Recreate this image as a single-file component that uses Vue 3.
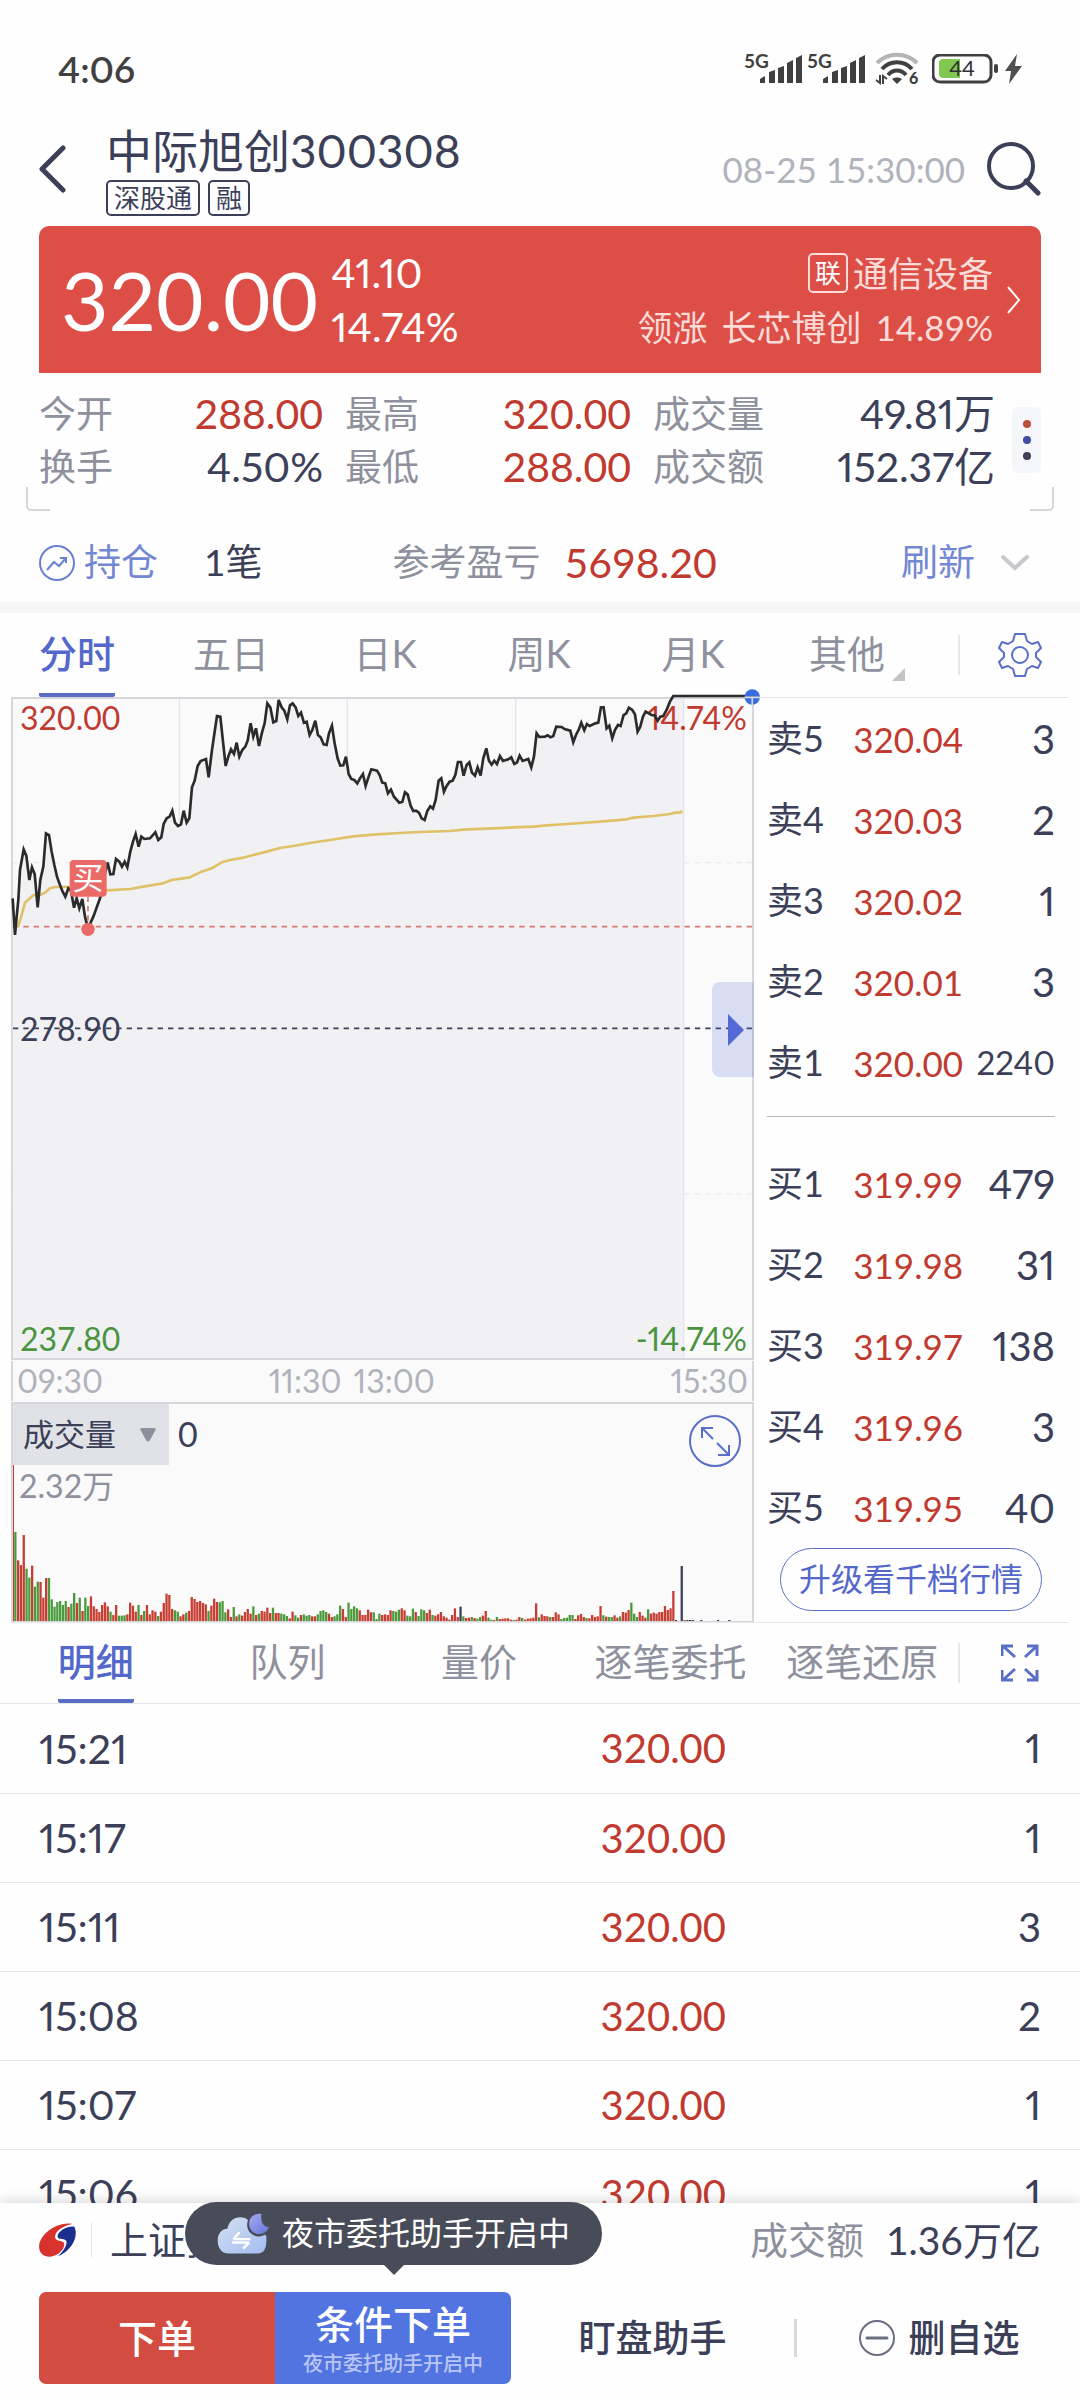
<!-- App.vue -->
<template>
  <div class="page">
    <div class="status-bar">
      <span class="clock">4:06</span>
      <div class="status-icons">
        <svg v-for="n in 2" :key="n" class="signal" width="60" height="48" viewBox="-1 -8 60 48">
          <text x="0" y="15" font-size="19" font-weight="700" fill="#404040">5G</text>
          <path d="M16 30V26L21 23V30ZM25 30V19L31 17V30ZM34 30V15L40 13V30ZM43 30V10L49 7V30ZM52 30V5L58 2V30Z" fill="#404040" />
        </svg>
        <svg class="wifi" width="48" height="48" viewBox="0 -7 48 48">
          <path d="M2 11C13 0 31 0 42 11" fill="none" stroke="#b4b4b4" stroke-width="4" />
          <path d="M7 17C15 8 29 8 37 17" fill="none" stroke="#404040" stroke-width="4" />
          <path d="M13 23C18 17 26 17 31 23" fill="none" stroke="#404040" stroke-width="4" />
          <path d="M17 27C20 25 24 25 27 27L22 32Z" fill="#404040" />
          <path d="M1 28L5 31V23M8 32V24L12 27" fill="none" stroke="#404040" stroke-width="2" />
          <text x="34" y="32" font-size="16" font-weight="900" fill="#404040">6</text>
        </svg>
        <svg class="battery" width="66" height="30" viewBox="0 0 66 30">
          <rect x="1" y="1" width="58" height="27" rx="7" fill="none" stroke="#404040" stroke-width="3" />
          <path d="M11 5H28V24H11Q7 24 7 20V9Q7 5 11 5Z" fill="#80c850" />
          <rect x="62" y="10" width="4" height="9" rx="2" fill="#404040" />
          <text x="30" y="22" font-size="22" text-anchor="middle" fill="#303030">44</text>
        </svg>
        <svg width="17" height="30" viewBox="0 0 17 30">
          <path d="M12 0L0 17H6L4 30L17 12H10Z" fill="#505050" />
        </svg>
      </div>
    </div>

    <header class="header">
      <button class="icon-btn back" aria-label="返回">
        <svg width="28" height="48" viewBox="0 0 28 48">
          <path d="M24 3L3 24L24 45" fill="none" stroke="#3b4058" stroke-width="5" stroke-linecap="round" stroke-linejoin="round" />
        </svg>
      </button>
      <div class="title-block">
        <h1>中际旭创300308</h1>
        <div class="tags">
          <span class="tag">深股通</span>
          <span class="tag">融</span>
        </div>
      </div>
      <span class="quote-time">08-25 15:30:00</span>
      <button class="icon-btn" aria-label="搜索">
        <svg width="54" height="54" viewBox="0 0 54 54">
          <circle cx="24" cy="24" r="22" fill="none" stroke="#3b4058" stroke-width="4" />
          <path d="M39 39L51 51" stroke="#3b4058" stroke-width="5" stroke-linecap="round" />
        </svg>
      </button>
    </header>

    <section class="summary">
      <div class="price-card">
        <span class="price">320.00</span>
        <div class="change">
          <span>41.10</span>
          <span>14.74%</span>
        </div>
        <a href="#" class="sector">
          <span class="sector-line"><i class="link-tag">联</i>通信设备</span>
          <span class="sector-line leader"><span>领涨</span><span>长芯博创</span><span>14.89%</span></span>
        </a>
        <svg class="card-arrow" width="14" height="28" viewBox="0 0 14 28">
          <path d="M1 1L12 14L1 27" fill="none" stroke="#fff" stroke-width="2" />
        </svg>
      </div>
      <div class="stats">
        <dl class="stats-grid">
          <div v-for="s in stats" :key="s.label" class="stat">
            <dt>{{ s.label }}</dt>
            <dd :class="{ up: s.up }">{{ s.value }}</dd>
          </div>
        </dl>
        <button class="more-btn" aria-label="更多">
          <i class="dot dot-red"></i><i class="dot dot-blue"></i><i class="dot dot-dark"></i>
        </button>
      </div>
      <i class="corner corner-left"></i>
      <i class="corner corner-right"></i>
    </section>

    <section class="position">
      <svg width="38" height="38" viewBox="0 0 38 38">
        <circle cx="19" cy="19" r="17" fill="none" stroke="#6b80d0" stroke-width="2" />
        <path d="M9 26L16 18L21 22L28 14M22 14H28V19" fill="none" stroke="#6b80d0" stroke-width="2" />
      </svg>
      <a href="#" class="pos-link">持仓</a>
      <span class="pos-count">1笔</span>
      <span class="pos-label">参考盈亏</span>
      <span class="pos-profit">5698.20</span>
      <button class="refresh">刷新</button>
      <button class="icon-btn" aria-label="展开">
        <svg width="28" height="16" viewBox="0 0 28 16">
          <path d="M2 2L14 13L26 2" fill="none" stroke="#c8c9ce" stroke-width="4" stroke-linecap="round" />
        </svg>
      </button>
    </section>

    <nav class="tabs period-tabs">
      <div class="tab-list">
        <button v-for="(t, i) in periods" :key="t" class="tab" :class="{ active: period === i }" @click="period = i">
          <span>{{ t }}<i v-if="i === 5" class="tri"></i></span>
        </button>
      </div>
      <button class="icon-btn tab-icon" aria-label="设置">
        <svg width="44" height="44" viewBox="0 0 44 44">
          <path d="M17 1H27L29 8L34 11L40 9L43 15L38 20V24L43 29L40 35L34 33L29 36L27 43H17L15 36L10 33L4 35L1 29L6 24V20L1 15L4 9L10 11L15 8Z" fill="none" stroke="#5a70c8" stroke-width="2" stroke-linejoin="round" />
          <circle cx="22" cy="22" r="8" fill="none" stroke="#5a70c8" stroke-width="2" />
        </svg>
      </button>
    </nav>

    <section class="market">
      <div class="charts">
        <div class="price-chart">
          <svg class="chart-svg" viewBox="0 0 739 659">
            <g transform="translate(-13 -19) scale(0.3333)">
              <path d="M538 57V2034M1042 57V2034M1547 57V2034" stroke="#e4e4e8" stroke-width="4" />
              <path d="M39 548H2257M39 1542H2257" stroke="#ebebee" stroke-width="4" stroke-dasharray="16 15" />
              <path :d="areaPath" fill="#f1f1f4" />
              <path d="M2051 57V2034" stroke="#e4e4e8" stroke-width="4" />
              <path d="M39 740H2257" stroke="#d77a6e" stroke-width="5" stroke-dasharray="16 15" />
              <path d="M39 1045H2257" stroke="#3b4058" stroke-width="5" stroke-dasharray="16 15" />
              <polyline :points="avgLine" fill="none" stroke="#dfc168" stroke-width="8" stroke-linejoin="round" />
            </g>
            <text x="7" y="31" fill="#c03a2f">320.00</text>
            <text x="734" y="31" text-anchor="end" class="percent" fill="#c03a2f">14.74%</text>
            <text x="7" y="342" fill="#3b4058">278.90</text>
            <text x="7" y="652" fill="#4a9440">237.80</text>
            <text x="734" y="652" text-anchor="end" class="percent" fill="#4a9440">-14.74%</text>
            <g transform="translate(-13 -19) scale(0.3333)">
              <polyline :points="priceLine" fill="none" stroke="#2b2b2b" stroke-width="8" stroke-linejoin="miter" />
              <path d="M264 650V740" stroke="#d77a6e" stroke-width="5" stroke-dasharray="16 12" />
              <circle cx="264" cy="748" r="20" fill="#e96a66" />
              <rect x="209" y="540" width="111" height="110" rx="12" fill="#e96a66" />
              <circle cx="2257" cy="51" r="23" fill="#3a6ce0" />
              <path d="M2234 52H2280M2257 52V75" stroke="#d6d7dc" stroke-width="5" />
            </g>
            <text x="75" y="190" class="mark-text" text-anchor="middle" fill="#fff">买</text>
          </svg>
          <button class="side-handle" aria-label="收起盘口">
            <svg width="16" height="32" viewBox="0 0 16 32"><path d="M0 0L16 16L0 32Z" fill="#5469d6" /></svg>
          </button>
        </div>
        <div class="time-axis">
          <div class="time-part"><span>09:30</span><span>11:30</span></div>
          <div class="time-part"><span>13:00</span><span>15:30</span></div>
        </div>
        <div class="volume-chart">
          <svg class="chart-svg" viewBox="0 0 739 217">
            <rect v-for="b in bars" :key="b.i" :x="b.x" :y="b.y" :width="b.w" :height="b.h" :fill="b.color" />
          </svg>
          <div class="volume-head">
            <label class="indicator">
              <select aria-label="指标">
                <option>成交量</option>
              </select>
              <svg width="16" height="14" viewBox="0 0 16 14">
                <path d="M2 0H14Q17 0 15 3L10 12Q8 15 6 12L1 3Q-1 0 2 0Z" fill="#8e919d" />
              </svg>
            </label>
            <span>0</span>
          </div>
          <div class="volume-max">2.32万</div>
          <button class="icon-btn expand" aria-label="放大">
            <svg width="54" height="54" viewBox="0 0 54 54">
              <circle cx="27" cy="27" r="25" fill="none" stroke="#5a70c8" stroke-width="2" />
              <path d="M25 25L14 14M14 24V14H25M29 29L41 41M41 31V41H30" fill="none" stroke="#5a70c8" stroke-width="2" />
            </svg>
          </button>
        </div>
      </div>

      <div class="order-book">
        <table>
          <tbody>
            <tr v-for="o in asks" :key="o[0]">
              <th>{{ o[0] }}</th>
              <td class="ob-price">{{ o[1] }}</td>
              <td class="ob-qty" :class="{ long: o[2].length > 3 }">{{ o[2] }}</td>
            </tr>
          </tbody>
        </table>
        <div class="ob-line"></div>
        <table>
          <tbody>
            <tr v-for="o in bids" :key="o[0]">
              <th>{{ o[0] }}</th>
              <td class="ob-price">{{ o[1] }}</td>
              <td class="ob-qty">{{ o[2] }}</td>
            </tr>
          </tbody>
        </table>
        <button class="upgrade">升级看千档行情</button>
      </div>
    </section>

    <nav class="tabs detail-tabs">
      <div class="tab-list">
        <button v-for="(t, i) in details" :key="t" class="tab" :class="{ active: detail === i }" @click="detail = i">
          <span>{{ t }}</span>
        </button>
      </div>
      <button class="icon-btn tab-icon" aria-label="全屏">
        <svg width="38" height="38" viewBox="0 0 38 38">
          <path d="M1 12V2H12M2 2L14 13M26 2H36V12M36 2L24 13M1 26V36H12M2 36L14 25M26 36H36V26M36 36L24 25" fill="none" stroke="#5a70c8" stroke-width="3" />
        </svg>
      </button>
    </nav>

    <div class="trades">
      <table>
        <tbody>
          <tr v-for="t in trades" :key="t[0]">
            <td class="t-time">{{ t[0] }}</td>
            <td class="t-price">320.00</td>
            <td class="t-qty">{{ t[1] }}</td>
          </tr>
        </tbody>
      </table>
    </div>

    <footer class="footer">
      <div class="index-row">
        <svg width="37" height="34" viewBox="0 0 106 98">
          <path d="M96 3C55 -6 0 32 0 68C0 90 15 98 32 97C60 94 76 70 72 57C66 50 48 54 46 42C44 24 70 8 96 3Z" fill="#d8322c" />
          <path d="M101 10C114 34 100 76 54 96C74 78 82 60 78 51C70 42 54 50 53 38C55 22 80 8 101 10Z" fill="#1c2f8c" />
        </svg>
        <i class="v-line"></i>
        <span class="index-name">上证指数</span>
        <span class="index-label">成交额</span>
        <span class="index-value">1.36万亿</span>
      </div>
      <div class="actions">
        <button class="order">下单</button>
        <button class="cond-order">
          <span>条件下单</span>
          <small>夜市委托助手开启中</small>
        </button>
        <button class="text-btn">盯盘助手</button>
        <i class="v-line bold"></i>
        <button class="text-btn">
          <svg width="38" height="38" viewBox="0 0 38 38">
            <circle cx="19" cy="19" r="17" fill="none" stroke="#6a6e80" stroke-width="2" />
            <path d="M9 19H29" stroke="#6a6e80" stroke-width="3" stroke-linecap="round" />
          </svg>
          删自选
        </button>
      </div>
      <div class="bubble">
        <svg width="52" height="42" viewBox="0 0 152 122">
          <defs>
            <linearGradient id="cloud" x1="0" y1="0" x2="1" y2="1">
              <stop offset="0" stop-color="#d5e0f2" />
              <stop offset="1" stop-color="#a3bdf0" />
            </linearGradient>
            <linearGradient id="moon" x1="0" y1="0" x2="1" y2="1">
              <stop offset="0" stop-color="#a5a8f0" />
              <stop offset="1" stop-color="#6678d8" />
            </linearGradient>
          </defs>
          <path d="M34 118C12 118 2 100 2 80C2 58 16 46 30 46C36 22 50 12 68 12C84 12 94 20 98 32C118 34 126 52 144 66C146 96 142 118 118 118Z" fill="url(#cloud)" />
          <circle cx="122" cy="34" r="34" fill="#474c58" />
          <path d="M130 2C108 0 92 14 94 34C96 52 110 62 124 61C140 60 150 50 152 40C138 42 126 28 130 2Z" fill="url(#moon)" />
          <path d="M48 76H98M48 76L66 56M94 86H44M94 86L76 104" fill="none" stroke="#fff" stroke-width="7" />
        </svg>
        夜市委托助手开启中
      </div>
    </footer>
  </div>
</template>

<script setup>
  import { computed, ref } from 'vue';

  const period = ref(0);
  const detail = ref(0);

  const periods = ['分时', '五日', '日K', '周K', '月K', '其他'];
  const details = ['明细', '队列', '量价', '逐笔委托', '逐笔还原'];

  const stats = [
    { label: '今开', value: '288.00', up: true },
    { label: '最高', value: '320.00', up: true },
    { label: '成交量', value: '49.81万' },
    { label: '换手', value: '4.50%' },
    { label: '最低', value: '288.00', up: true },
    { label: '成交额', value: '152.37亿' }
  ];

  const asks = [
    ['卖5', '320.04', '3'],
    ['卖4', '320.03', '2'],
    ['卖3', '320.02', '1'],
    ['卖2', '320.01', '3'],
    ['卖1', '320.00', '2240']
  ];

  const bids = [
    ['买1', '319.99', '479'],
    ['买2', '319.98', '31'],
    ['买3', '319.97', '138'],
    ['买4', '319.96', '3'],
    ['买5', '319.95', '40']
  ];

  const trades = [
    ['15:21', '1'],
    ['15:17', '1'],
    ['15:11', '3'],
    ['15:08', '2'],
    ['15:07', '1'],
    ['15:06', '1']
  ];

  // minute prices, three units per pixel
  const priceLine = `38,655 45,765 50,710 55,660 60,570 71,508 79,527 88,600 96,562 104,582 113,682 121,600 130,560
    138,460 147,465 155,515 163,555 171,590 180,615 188,635 196,650 205,625 213,632 222,683 230,655 238,685 247,657
    255,710 264,745 280,710 300,655 310,600 323,548 331,583 340,582 348,537 358,545 366,560 374,545 382,562 391,515
    399,485 407,462 416,500 424,470 433,477 450,475 466,457 475,480 484,472 491,432 500,415 509,410 517,392 525,428
    534,438 543,433 551,392 560,428 568,415 576,322 584,302 593,258 602,243 618,237 626,292 636,210 651,108 661,110
    677,258 685,230 693,208 702,222 710,188 718,230 727,210 736,200 743,182 752,130 760,170 768,145 777,198 786,158
    794,130 802,70 811,82 820,127 829,123 836,60 845,82 853,92 862,118 870,76 878,70 887,82 895,108 903,98 912,128
    920,125 929,165 937,150 946,122 954,165 962,172 971,193 980,195 987,160 996,137 1004,190 1013,235 1021,257
    1030,256 1038,230 1046,282 1054,297 1063,300 1072,310 1080,295 1089,282 1097,318 1106,290 1114,268 1131,272
    1139,285 1147,308 1156,310 1164,340 1173,329 1182,350 1198,368 1207,366 1215,337 1223,343 1232,377 1240,393
    1248,392 1257,398 1265,415 1274,420 1282,393 1291,379 1299,386 1307,360 1316,302 1324,295 1332,335 1340,318
    1349,305 1358,302 1366,285 1374,246 1383,246 1391,287 1400,255 1408,247 1416,278 1425,287 1433,262 1442,287
    1450,235 1459,205 1467,242 1475,254 1483,242 1491,252 1500,228 1509,243 1525,238 1534,232 1543,252 1551,248
    1559,227 1568,243 1585,237 1594,262 1602,230 1610,160 1618,171 1635,170 1643,166 1652,172 1660,168 1669,140
    1685,141 1694,147 1711,152 1720,187 1728,165 1736,150 1744,128 1753,151 1761,132 1769,138 1786,130 1795,128
    1803,82 1811,82 1820,145 1828,137 1837,175 1845,150 1854,135 1862,138 1871,105 1879,100 1887,83 1897,90
    1905,103 1913,155 1921,140 1929,110 1937,95 1955,105 1964,106 1973,122 1981,110 1990,108 2000,90 2010,65
    2020,48 2257,48`;

  const avgLine = `38,740 55,738 65,705 75,668 90,655 100,645 120,645 135,638 150,625 165,621 210,621 265,630 320,631
    390,627 430,620 485,611 515,600 570,592 605,575 635,565 665,547 690,540 735,532 760,525 800,515 840,504 880,498
    930,489 990,480 1060,469 1130,463 1200,459 1260,456 1350,453 1390,449 1480,445 1600,440 1640,436 1700,432
    1800,425 1880,418 1900,413 1960,408 2010,402 2025,398 2040,398 2047,393`;

  const areaPath = computed(() => {
    const points = priceLine.split(/\s+/).slice(0, -2);
    return `M39 2034L${points.join('L')}L2020 57L2051 57L2051 2034Z`;
  });

  // r - up, g - down, d - flat
  const volumes = `r468 g267 r182 r168 r258 g157 g130 r166 g103 g118 r117 r70 r129 g129 g65 g43 g57 g60 g48 g60 r42 g52
    g84 r54 g70 r30 g70 g45 r74 r44 r36 r27 r48 r56 r44 g28 r18 r48 g16 g16 g17 r20 r55 r46 r28 g48 r18 g30 r48 r20 r32
    r28 g15 r28 r54 r82 r78 r36 g32 g28 r14 r20 g25 r30 r72 r66 r57 r60 r54 r50 g30 r46 r67 r57 g56 g60 g26 r35 r12 g42
    r14 g20 r16 r27 r36 r22 g44 r18 g22 r30 r28 r40 r24 g40 r24 r24 g22 g20 g15 r8 r28 g17 g10 r18 g20 g16 g18 r14 r14
    g20 g30 g32 g27 r22 r12 g14 g20 g46 r36 r12 g55 g36 g44 g38 r32 r18 r18 r34 r26 g26 g6 g22 r18 r20 r18 r32 g30 g28
    g34 r38 r32 g16 g14 g37 r27 g15 g35 g32 r24 r34 g18 r16 r20 r27 r14 r10 r4 r18 r38 r12 d43 g14 r9 r10 g12 r9 g7 g12
    r16 r30 g10 g4 r3 g12 r6 r7 r8 r8 r4 g3 r4 r12 g9 r4 r7 r8 r10 r53 g11 r20 r15 r14 g12 r12 r26 r20 g6 g9 g10 g18 g18
    r6 r17 r21 r12 g9 r8 r18 r12 r14 r45 g17 r13 g12 g12 r17 r10 g14 r27 r25 r33 g55 g22 g12 r27 r16 r10 g35 r22 r25 r22
    r27 r27 r45 r33 r38 r90 d3 d0 d165 r3 d3 d3 d3 d0 d0 d3 d0 d0 d0 d0 d0 d3 d0 d0 d0 d3`;

  const barColors = { r: '#c73d32', g: '#4a9a3c', d: '#3b4058' };

  const bars = computed(() => {
    return volumes.split(/\s+/).map((v, i) => {
      const h = Number(v.slice(1)) / 3;
      return {
        i,
        x: i === 0 ? 0 : i * 2.8 - 1.6,
        y: 217 - h,
        w: i === 0 ? 1 : 2.3,
        h,
        color: barColors[v[0]]
      };
    });
  });
</script>

<style>
  body {
    margin: 0;
    background: #fff;
  }
</style>

<style scoped>
  .page {
    display: flex;
    flex-direction: column;
    height: 100vh;
    overflow: hidden;
    background: #fefefe;
    color: #3b4058;
    font-family: Lato, "Noto Sans CJK SC", sans-serif;
    font-variant-numeric: tabular-nums;
    line-height: 1.2;
  }

  .page > * {
    flex-shrink: 0;
  }

  svg {
    display: block;
    flex-shrink: 0;
  }

  button, select {
    font: inherit;
    color: inherit;
    background: none;
    border: none;
    padding: 0;
    margin: 0;
    cursor: pointer;
  }

  a {
    color: inherit;
    text-decoration: none;
  }

  i {
    font-style: normal;
  }

  table {
    width: 100%;
    border-collapse: collapse;
  }

  td, th {
    padding: 0;
    font-weight: 400;
  }

  .status-bar {
    display: flex;
    justify-content: space-between;
    align-items: center;
    height: 86px;
    padding: 26px 58px 0;
    color: #404040;
  }

  .clock {
    font-size: 37px;
    font-weight: 600;
    font-variant-numeric: proportional-nums;
  }

  .status-icons {
    display: flex;
    align-items: center;
  }

  .signal {
    margin-right: 3px;
  }

  .wifi {
    margin-left: 6px;
    margin-right: 9px;
  }

  .battery {
    margin-right: 7px;
  }

  .header {
    display: flex;
    align-items: center;
    height: 114px;
    padding: 0 39px;
  }

  .back {
    margin-right: 39px;
  }

  .title-block {
    flex: 1;
  }

  h1 {
    margin: 0;
    font-size: 46px;
    font-weight: 400;
    font-variant-numeric: proportional-nums;
    line-height: 58px;
  }

  .tags {
    display: flex;
    gap: 8px;
  }

  .tag {
    padding: 0 6px;
    border: 2px solid #3b4058;
    border-radius: 5px;
    font-size: 26px;
    line-height: 32px;
  }

  .quote-time {
    margin-right: 22px;
    font-size: 35px;
    color: #b0b3bb;
  }

  .summary {
    position: relative;
    margin: 0 26px;
    padding: 0 13px 18px;
  }

  .price-card {
    display: flex;
    align-items: center;
    height: 147px;
    padding: 0 20px 0 22px;
    box-sizing: border-box;
    border-radius: 10px 10px 0 0;
    background: #dd4e46;
    color: #fff;
  }

  .price {
    font-size: 82px;
  }

  .change {
    display: flex;
    flex-direction: column;
    margin-left: 13px;
    font-size: 41px;
    font-variant-numeric: proportional-nums;
    line-height: 54px;
  }

  .sector {
    flex: 1;
    display: flex;
    flex-direction: column;
    align-items: flex-end;
    font-size: 35px;
    font-variant-numeric: proportional-nums;
    line-height: 54px;
    color: #fbdcd9;
  }

  .sector-line {
    display: flex;
    align-items: center;
  }

  .leader {
    gap: 14px;
    font-variant-numeric: tabular-nums;
  }

  .link-tag {
    margin-right: 5px;
    padding: 0 5px;
    border: 2px solid #fbdcd9;
    border-radius: 5px;
    font-size: 26px;
    line-height: 36px;
    color: #fff;
  }

  .card-arrow {
    margin-left: 14px;
  }

  .stats {
    display: flex;
    align-items: center;
    gap: 17px;
    padding-top: 14px;
  }

  .stats-grid {
    flex: 1;
    display: grid;
    grid-template-columns: 284fr 286fr 342fr;
    column-gap: 22px;
    margin: 0;
    font-size: 37px;
    line-height: 53px;
  }

  .stat {
    display: flex;
    justify-content: space-between;
  }

  dt {
    color: #8e919d;
  }

  dd {
    margin: 0;
    font-size: 41px;
    font-variant-numeric: proportional-nums;
  }

  .up {
    color: #c03a2f;
    font-variant-numeric: tabular-nums;
  }

  .more-btn {
    display: flex;
    flex-direction: column;
    align-items: center;
    justify-content: center;
    gap: 8px;
    width: 29px;
    height: 66px;
    border-radius: 6px;
    background: #f5f6f9;
  }

  .dot {
    width: 8px;
    height: 8px;
    border-radius: 50%;
  }

  .dot-red {
    background: #b8503c;
  }

  .dot-blue {
    background: #3c4fa0;
  }

  .dot-dark {
    background: #3b4058;
  }

  .corner {
    position: absolute;
    bottom: 0;
    width: 22px;
    height: 22px;
    border-bottom: 2px solid #d6d7dc;
  }

  .corner-left {
    left: 0;
    border-left: 2px solid #d6d7dc;
    border-bottom-left-radius: 5px;
  }

  .corner-right {
    right: 0;
    border-right: 2px solid #d6d7dc;
    border-bottom-right-radius: 5px;
  }

  .position {
    display: flex;
    align-items: center;
    height: 102px;
    padding: 12px 51px 0 38px;
    box-sizing: border-box;
    border-bottom: 11px solid #f6f6f9;
    font-size: 37px;
  }

  .pos-link {
    margin-left: 8px;
    color: #7487d2;
  }

  .pos-count {
    margin-left: 46px;
  }

  .pos-label {
    margin-left: 130px;
    color: #8e919d;
  }

  .pos-profit {
    flex: 1;
    margin-left: 24px;
    font-size: 41px;
    color: #c03a2f;
  }

  .refresh {
    margin-right: 26px;
    color: #7487d2;
  }

  .tabs {
    display: flex;
    align-items: center;
    font-size: 38px;
    color: #8e919d;
  }

  .tab-list {
    flex: 1;
    display: flex;
  }

  .tab {
    flex: 1 1 0;
    line-height: 80px;
  }

  .tab span {
    position: relative;
    display: inline-block;
    border-bottom: 4px solid transparent;
    white-space: nowrap;
  }

  .tab.active {
    color: #5468cc;
  }

  .tab.active span {
    border-radius: 2px;
    border-color: #5a6cc4;
  }

  .tabs .active {
    font-weight: 500;
  }

  .tri {
    position: absolute;
    right: -20px;
    bottom: 12px;
    border-left: 13px solid transparent;
    border-bottom: 13px solid #c4c4c6;
  }

  .icon-btn {
    line-height: 0;
  }

  .tab-icon {
    display: flex;
    justify-content: center;
    align-items: center;
    width: 122px;
    height: 40px;
    border-left: 2px solid #e8e9ec;
    box-sizing: border-box;
  }

  .period-tabs .tab-list {
    margin-right: 34px;
  }

  .market {
    display: grid;
    grid-template-columns: minmax(0, 743fr) minmax(0, 315fr);
    margin: 0 11px;
    border-bottom: 1px solid #e6e7ea;
  }

  .charts {
    background: #fafafb;
  }

  .price-chart {
    position: relative;
    border: 2px solid #d6d7dc;
  }

  .chart-svg {
    width: 100%;
    height: auto;
    overflow: visible;
    font-size: 32px;
  }

  .percent {
    font-variant-numeric: proportional-nums;
  }

  .mark-text {
    font-size: 31px;
  }

  .side-handle {
    position: absolute;
    top: 43%;
    right: -2px;
    display: flex;
    align-items: center;
    justify-content: center;
    width: 42px;
    height: 95px;
    padding-left: 5px;
    border-radius: 8px 0 0 8px;
    background: rgba(84, 105, 214, 0.2);
  }

  .time-axis {
    display: grid;
    grid-template-columns: 325fr 395fr;
    column-gap: 12px;
    margin: 1px 0;
    padding: 0 4px;
    border: solid #d6d7dc;
    border-width: 0 2px;
    font-size: 32px;
    font-variant-numeric: proportional-nums;
    line-height: 40px;
    color: #b0b3bb;
  }

  .time-part {
    display: flex;
    justify-content: space-between;
  }

  .volume-chart {
    position: relative;
    border: 2px solid #d6d7dc;
    border-bottom-width: 1px;
  }

  .volume-head {
    position: absolute;
    top: 0;
    left: 0;
    display: flex;
    align-items: center;
    gap: 9px;
    font-size: 34px;
  }

  .indicator {
    display: flex;
    align-items: center;
    width: 156px;
    height: 61px;
    padding: 0 13px 0 10px;
    box-sizing: border-box;
    background: #e0e2e6;
  }

  .indicator select {
    flex: 1;
    min-width: 0;
    appearance: none;
    font-size: 31px;
  }

  .volume-max {
    position: absolute;
    top: 61px;
    left: 6px;
    font-size: 32px;
    line-height: 42px;
    color: #8e919d;
  }

  .expand {
    position: absolute;
    top: 10px;
    right: 10px;
  }

  .order-book {
    display: flex;
    flex-direction: column;
    padding: 0 14px 11px 13px;
    border-top: 1px solid #e6e7ea;
    font-size: 36px;
  }

  .order-book tr {
    height: 81px;
  }

  .order-book th {
    width: 60px;
    text-align: left;
    white-space: nowrap;
  }

  .ob-price {
    text-align: right;
    font-size: 35px;
    color: #c03a2f;
  }

  .ob-qty {
    width: 92px;
    text-align: right;
    font-size: 40px;
    font-variant-numeric: proportional-nums;
  }

  .ob-qty.long {
    font-size: 33px;
  }

  .ob-line {
    height: 1px;
    margin: 13px 0 26px;
    background: #b8b9be;
  }

  .upgrade {
    align-self: center;
    height: 63px;
    padding: 0 18px;
    border: 1px solid #5a70c8;
    border-radius: 32px;
    font-size: 32px;
    color: #5468cc;
    white-space: nowrap;
  }

  .detail-tabs {
    height: 81px;
    box-sizing: border-box;
    border-bottom: 1px solid #e6e7ea;
  }

  .detail-tabs .tab {
    line-height: 76px;
  }

  .page > .trades {
    flex: 1 1 0;
    min-height: 0;
    overflow: hidden;
    font-size: 40px;
  }

  .trades tr {
    height: 89px;
    border-bottom: 1px solid #e6e7ea;
  }

  .t-time {
    width: 315px;
    padding-left: 39px;
    font-size: 41px;
    font-variant-numeric: proportional-nums;
  }

  .t-price {
    text-align: right;
    color: #c03a2f;
  }

  .t-qty {
    width: 315px;
    padding-right: 39px;
    text-align: right;
    font-variant-numeric: proportional-nums;
  }

  .footer {
    position: relative;
    height: 197px;
    background: #fefefe;
    box-shadow: 0 0 14px rgba(0, 0, 0, 0.2);
  }

  .index-row {
    display: flex;
    align-items: center;
    height: 74px;
    padding: 0 39px;
    font-size: 38px;
  }

  .v-line {
    width: 1px;
    height: 34px;
    margin: 0 18px 0 15px;
    background: #e0e1e5;
  }

  .index-name {
    flex: 1;
  }

  .index-label {
    margin-right: 22px;
    color: #8e919d;
  }

  .index-value {
    font-size: 39px;
  }

  .actions {
    display: flex;
    align-items: center;
    margin-top: 15px;
    padding-left: 39px;
  }

  .order, .cond-order {
    width: 236px;
    height: 92px;
    font-size: 39px;
    font-weight: 500;
    color: #fff;
  }

  .order {
    border-radius: 7px 0 0 7px;
    background: #d34c42;
  }

  .cond-order {
    display: flex;
    flex-direction: column;
    align-items: center;
    justify-content: center;
    border-radius: 0 7px 7px 0;
    background: #5274e0;
    line-height: 50px;
  }

  .cond-order small {
    font-size: 20px;
    line-height: 28px;
    color: #b9c6f5;
  }

  .text-btn {
    flex: 1 1 0;
    display: flex;
    align-items: center;
    justify-content: center;
    gap: 13px;
    font-size: 37px;
    font-weight: 500;
    white-space: nowrap;
  }

  .v-line.bold {
    width: 3px;
    height: 38px;
    margin: 0;
    background: #d8d9dd;
  }

  .bubble {
    position: absolute;
    top: -1px;
    left: 185px;
    display: flex;
    align-items: center;
    gap: 13px;
    height: 63px;
    padding: 0 32px;
    border-radius: 32px;
    background: #474c58;
    font-size: 32px;
    color: #fff;
    white-space: nowrap;
  }

  .bubble::after {
    content: "";
    position: absolute;
    top: 100%;
    left: 50%;
    margin-left: -10px;
    border: 10px solid transparent;
    border-top-color: #474c58;
    border-bottom: none;
  }
</style>
